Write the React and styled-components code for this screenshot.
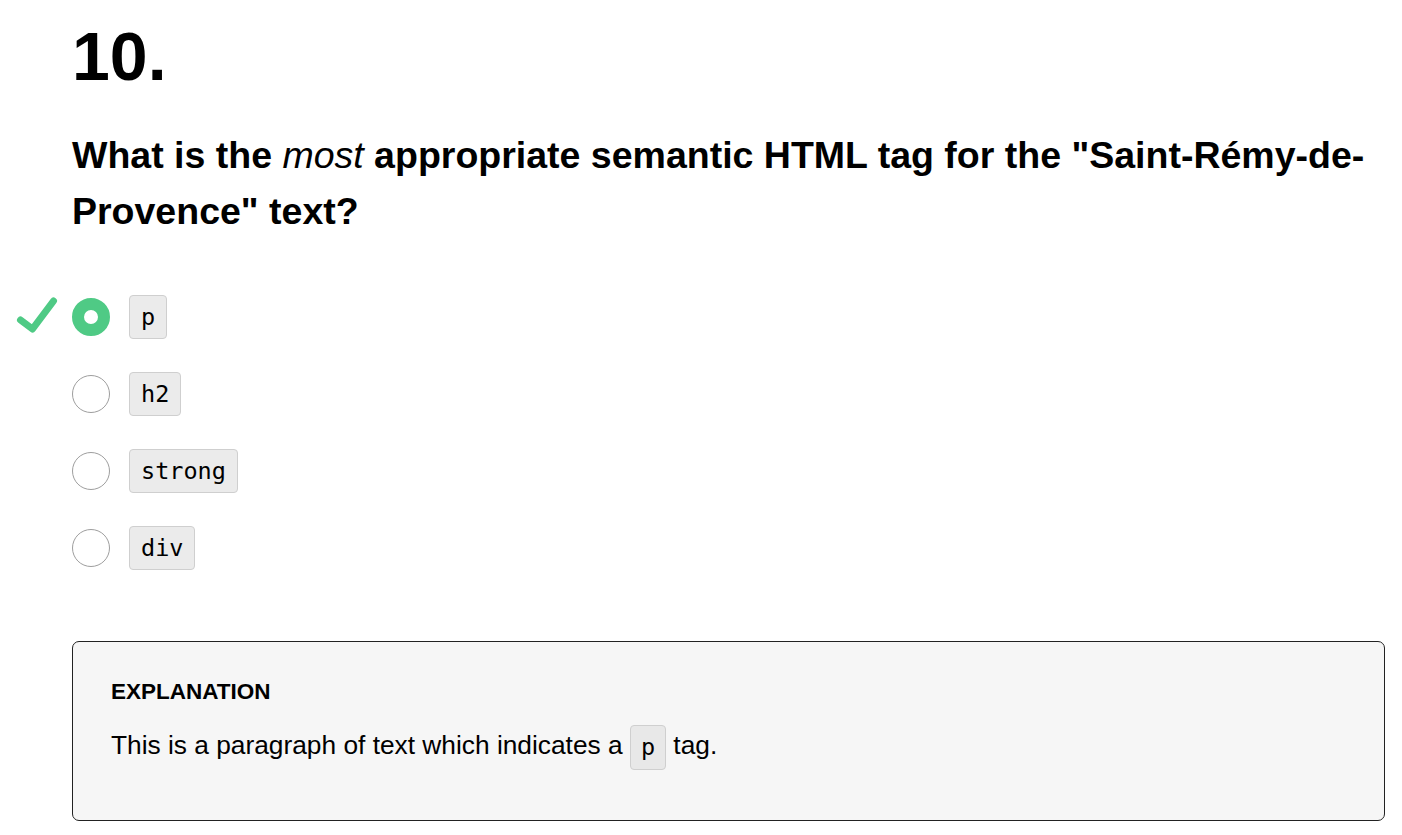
import { createGlobalStyle, styled } from "styled-components";

const GlobalStyle = createGlobalStyle`
  body {
    margin: 0;
    background: #ffffff;
    font-family: "Liberation Sans", Arial, sans-serif;
    color: #000;
  }
`;

const options = [
  { label: "p", selected: true },
  { label: "h2" },
  { label: "strong" },
  { label: "div" },
];

const App = () => {
  return (
    <>
      <GlobalStyle />
      <Page>
        <Number>10.</Number>
        <Question>
          What is the <em>most</em> appropriate semantic HTML tag for the
          "Saint-Rémy-de-Provence" text?
        </Question>
        <Options>
          {options.map((o) => (
            <Option key={o.label}>
              {o.selected && (
                <Check viewBox="0 0 42 38">
                  <path
                    d="M4 24 L16 33 L37 5"
                    fill="none"
                    stroke="#4fca85"
                    strokeWidth="7"
                    strokeLinecap="round"
                    strokeLinejoin="round"
                  />
                </Check>
              )}
              <Radio $selected={o.selected} />
              <Code>{o.label}</Code>
            </Option>
          ))}
        </Options>
        <Explanation>
          <ExplanationTitle>EXPLANATION</ExplanationTitle>
          <ExplanationText>
            This is a paragraph of text which indicates a <InlineCode>p</InlineCode> tag.
          </ExplanationText>
        </Explanation>
      </Page>
    </>
  );
};

const Page = styled.div`
  padding: 14px 17px 14px 72px;
`;

const Number = styled.h1`
  margin: 0;
  font-size: 68px;
  line-height: 84px;
  font-weight: 700;
`;

const Question = styled.h2`
  margin: 29px 0 0;
  font-size: 37.5px;
  line-height: 56px;
  font-weight: 700;

  em {
    font-weight: 400;
    font-style: italic;
  }
`;

const Options = styled.div`
  margin-top: 56px;
  display: flex;
  flex-direction: column;
  gap: 33px;
`;

const Option = styled.div`
  position: relative;
  display: flex;
  align-items: center;
  gap: 19px;
`;

const Check = styled.svg`
  position: absolute;
  left: -56px;
  top: 1px;
  width: 43px;
  height: 38px;
`;

const Radio = styled.span`
  box-sizing: border-box;
  width: 38px;
  height: 38px;
  border-radius: 50%;
  flex-shrink: 0;
  background: #fff;
  border: ${(p) => (p.$selected ? "12px solid #4fca85" : "1px solid #9e9e9e")};
`;

const Code = styled.code`
  box-sizing: border-box;
  height: 44px;
  display: inline-flex;
  align-items: center;
  padding: 0 11px;
  font-family: "DejaVu Sans Mono", "Liberation Mono", monospace;
  font-size: 23.5px;
  background: #ebebeb;
  border: 1px solid #cfcfcf;
  border-radius: 4px;
`;

const Explanation = styled.div`
  margin-top: 71px;
  padding: 36px 38px 50px;
  background: #f6f6f6;
  border: 1px solid #222;
  border-radius: 7px;
`;

const ExplanationTitle = styled.div`
  font-size: 22.5px;
  font-weight: 700;
  line-height: 28px;
`;

const ExplanationText = styled.p`
  margin: 16px 0 0;
  font-size: 26.3px;
  line-height: 46px;
`;

const InlineCode = styled.code`
  box-sizing: border-box;
  display: inline-block;
  height: 45px;
  line-height: 43px;
  padding: 0 10px;
  vertical-align: middle;
  font-family: "DejaVu Sans Mono", "Liberation Mono", monospace;
  font-size: 23.5px;
  background: #e8e8e8;
  border: 1px solid #cfcfcf;
  border-radius: 4px;
`;

export default App;
